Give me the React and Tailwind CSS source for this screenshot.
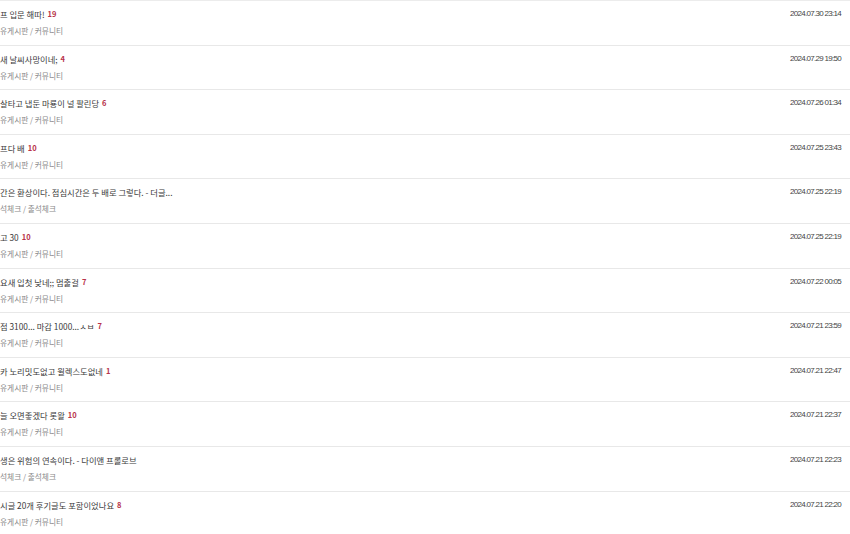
const posts = [
  { title: '프 입문 해따!', count: 19, board: '유게시판 / 커뮤니티', date: '2024.07.30 23:14' },
  { title: '새 날씨사망이네;', count: 4, board: '유게시판 / 커뮤니티', date: '2024.07.29 19:50' },
  { title: '살타고 냅둔 마룡이 널 팔린당', count: 6, board: '유게시판 / 커뮤니티', date: '2024.07.26 01:34' },
  { title: '프다 배', count: 10, board: '유게시판 / 커뮤니티', date: '2024.07.25 23:43' },
  { title: '간은 환상이다. 점심시간은 두 배로 그렇다. - 더글...', count: null, board: '석체크 / 출석체크', date: '2024.07.25 22:19' },
  { title: '고 30', count: 10, board: '유게시판 / 커뮤니티', date: '2024.07.25 22:19' },
  { title: '요새 입첫 낮네;; 멈출걸', count: 7, board: '유게시판 / 커뮤니티', date: '2024.07.22 00:05' },
  { title: '점 3100... 마감 1000...ㅅㅂ', count: 7, board: '유게시판 / 커뮤니티', date: '2024.07.21 23:59' },
  { title: '카 노리밋도없고 윌렉스도없네', count: 1, board: '유게시판 / 커뮤니티', date: '2024.07.21 22:47' },
  { title: '늘 오면좋겠다 롯왈', count: 10, board: '유게시판 / 커뮤니티', date: '2024.07.21 22:37' },
  { title: '생은 위험의 연속이다. - 다이앤 프롤로브', count: null, board: '석체크 / 출석체크', date: '2024.07.21 22:23' },
  { title: '시글 20개 후기글도 포함이었나요', count: 8, board: '유게시판 / 커뮤니티', date: '2024.07.21 22:20' },
];

function PostRow({ post }) {
  return (
    <div className="flex h-[44.6px] items-start justify-between border-b border-[#e8e8e8]">
      <div className="flex flex-col pt-[7px]">
        <div className="flex items-center whitespace-nowrap text-[8.3px] leading-[12px] text-[#3a3a3a]">
          <span>{post.title}</span>
          {post.count !== null && (
            <span className="ml-[3px] font-bold text-[7.5px] text-[#b8334a]">{post.count}</span>
          )}
        </div>
        <div className="mt-[5px] whitespace-nowrap text-[7.7px] leading-[12px] text-[#888]">{post.board}</div>
      </div>
      <div className="pt-[7px] pr-[9px] whitespace-nowrap text-[8px] leading-[12px] tracking-[-0.7px] text-[#444] font-['Liberation_Sans',sans-serif]">
        {post.date}
      </div>
    </div>
  );
}

export default function App() {
  return (
    <div className="w-[850px] h-[534px] overflow-hidden bg-white font-['Noto_Sans_CJK_KR','Noto_Sans',sans-serif]">
      <div className="border-t border-[#ececec]">
        {posts.map((p, i) => (
          <PostRow key={i} post={p} />
        ))}
      </div>
    </div>
  );
}
